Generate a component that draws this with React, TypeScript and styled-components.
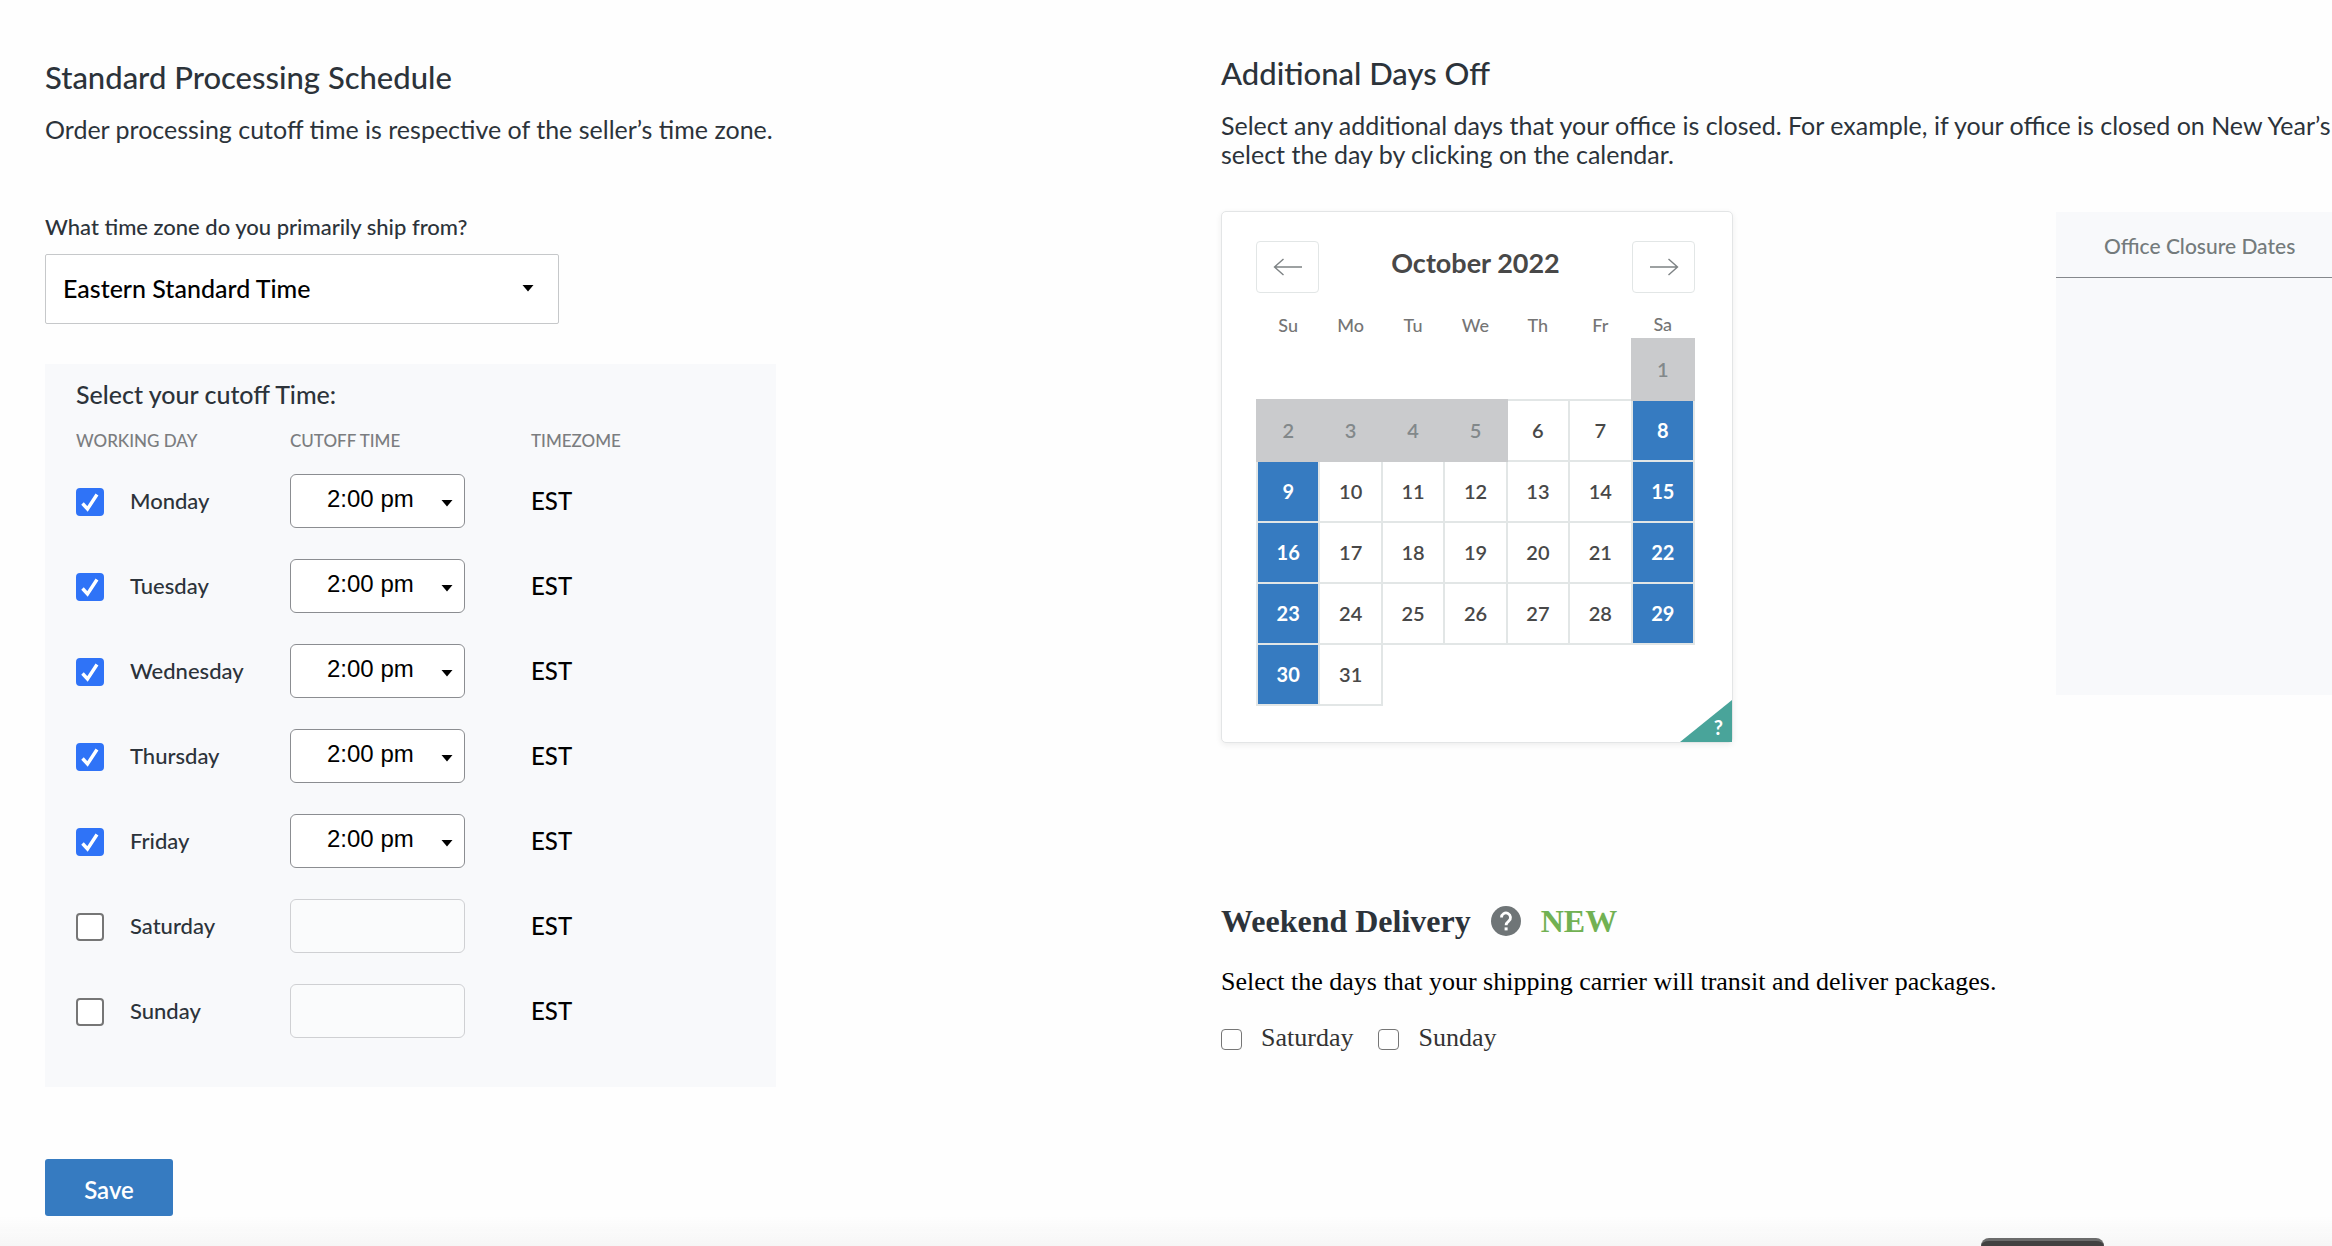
import React, { useState } from "react";
import styled, { createGlobalStyle, css } from "styled-components";

const sans = `Lato, "Open Sans", sans-serif`;
const serif = `"Liberation Serif", serif`;
const ink = "#2c333a";
const panel = "#f8f9fb";
const blue = "#367bc1";
const line = "#e2e6e6";

const Global = createGlobalStyle`
  *, *::before, *::after { box-sizing: border-box; }
  body { margin: 0; background: #fefefe; color: ${ink}; font-family: ${sans}; font-weight: 500; }
  button, select, input { font: inherit; margin: 0; }
  h1, h2, h3, p { margin: 0; font-weight: 500; }
`;

const Page = styled.main`
  display: grid;
  grid-template-columns: minmax(0, 1fr) minmax(0, 1fr);
  column-gap: 65px;
  padding-left: 45px;
  min-height: 100vh;
  overflow: hidden;
`;

const Column = styled.section<{ $top: number }>`
  display: flex;
  flex-direction: column;
  align-items: flex-start;
  padding-top: ${(p) => p.$top}px;
`;

const Heading = styled.h2`
  font-size: 31px;
  line-height: 36px;
`;

const Lead = styled.p`
  margin-top: 20px;
  font-size: 25px;
  line-height: 29px;
  font-weight: 400;
  white-space: nowrap;
`;

const FieldLabel = styled.label`
  margin-top: 70px;
  font-size: 22px;
  line-height: 26px;
`;

const SelectWrap = styled.div`
  position: relative;
  display: inline-block;
`;

const Caret = styled.svg<{ $right: number; $top: number }>`
  position: absolute;
  right: ${(p) => p.$right}px;
  top: ${(p) => p.$top}px;
  width: 12px;
  height: 7px;
  pointer-events: none;
`;

const ZoneSelect = styled.select`
  appearance: none;
  display: block;
  width: 514px;
  height: 70px;
  margin-top: 14px;
  padding: 0 40px 3px 17px;
  border: 1px solid #c6c8ca;
  border-radius: 2px;
  background: #fff;
  color: #000;
  font-size: 25px;
`;

const CutoffPanel = styled.div`
  width: 731px;
  max-width: 100%;
  margin-top: 40px;
  padding: 15px 31px 34px;
  background: ${panel};
`;

const PanelTitle = styled.h3`
  font-size: 25px;
  line-height: 30px;
`;

const CutoffTable = styled.table`
  width: 100%;
  margin-top: 20px;
  border-collapse: collapse;
  table-layout: fixed;
  th, td { padding: 0; text-align: left; }
  th { font-size: 17px; line-height: 24px; height: 29px; font-weight: 500; color: #7b7d80; vertical-align: top; }
  td { height: 85px; vertical-align: middle; font-size: 24px; color: #000; }
`;

const Col = styled.col<{ $w?: number }>`
  ${(p) => p.$w && css`width: ${p.$w}px;`}
`;

const DayLabel = styled.label`
  display: flex;
  align-items: center;
  gap: 26px;
  font-size: 22px;
  color: ${ink};
`;

const Check = styled.input<{ $size: number }>`
  appearance: none;
  flex: none;
  width: ${(p) => p.$size}px;
  height: ${(p) => p.$size}px;
  margin-top: 3px;
  border: ${(p) => (p.$size > 24 ? 2 : 1)}px solid #767676;
  border-radius: 4px;
  background: #fff;
  &:checked {
    border-color: #2f73f7;
    background: #2f73f7 url("data:image/svg+xml,%3Csvg xmlns='http://www.w3.org/2000/svg' viewBox='0 0 24 24'%3E%3Cpath d='M4.5 13.5l5 5.5L19 4.5' fill='none' stroke='white' stroke-width='3.4'/%3E%3C/svg%3E") center / 100% no-repeat;
  }
`;

const TimeSelect = styled.select`
  appearance: none;
  display: block;
  width: 175px;
  height: 54px;
  padding: 0 26px 4px 36px;
  border: 1px solid #8b8d91;
  border-radius: 6px;
  background: #fff;
  color: #000;
  font-family: "Liberation Sans", sans-serif;
  font-size: 24px;
  opacity: 1;
  &:disabled { border-color: #cfd0d3; background: #fafbfc; }
`;

const SaveButton = styled.button`
  width: 128px;
  height: 57px;
  margin-top: 72px;
  padding: 4px 0 0;
  border: 0;
  border-radius: 3px;
  background: ${blue};
  color: #fff;
  font-size: 24px;
  font-weight: 600;
`;

const DaysOffRow = styled.div`
  display: flex;
  align-items: flex-start;
  align-self: stretch;
  gap: 323px;
  margin-top: 42px;
`;

const Calendar = styled.div`
  position: relative;
  flex: none;
  width: 512px;
  padding: 29px 37px 36px 34px;
  border: 1px solid #e3e5e6;
  border-radius: 5px;
  background: #fff;
  box-shadow: 0 2px 6px rgba(0, 0, 0, 0.07);
`;

const CalendarBar = styled.div`
  display: flex;
  align-items: center;
  justify-content: space-between;
`;

const ArrowButton = styled.button`
  display: flex;
  align-items: center;
  justify-content: center;
  width: 63px;
  height: 52px;
  padding: 0;
  border: 1px solid ${line};
  border-radius: 4px;
  background: #fff;
`;

const Month = styled.h3`
  padding-bottom: 10px;
  font-size: 27px;
  font-weight: 700;
  color: #484848;
`;

const DayTable = styled.table`
  width: 439px;
  border-collapse: collapse;
  table-layout: fixed;
  th { height: 46px; padding: 0 0 3px; vertical-align: bottom; font-size: 18px; line-height: 22px; font-weight: 500; color: #757575; }
`;

type Kind = "blank" | "past" | "open" | "off";

const DayCell = styled.td<{ $kind: Kind }>`
  height: 61px;
  padding: 0;
  text-align: center;
  font-size: 20px;
  font-weight: 600;
  color: #484848;
  ${(p) => p.$kind !== "blank" && css`border: 2px solid ${line};`}
  ${(p) => p.$kind === "past" && css`border: 2px double #cacbcd; background: #cacbcd; color: #82888a;`}
  ${(p) => p.$kind === "off" && css`background: ${blue}; color: #fff; font-weight: 700;`}
`;

const DayButton = styled.button`
  width: 100%;
  height: 100%;
  padding: 0 0 2px;
  border: 0;
  background: none;
  color: inherit;
`;

const HelpCorner = styled.button`
  position: absolute;
  right: 0;
  bottom: 0;
  width: 52px;
  height: 42px;
  padding: 12px 9px 0 0;
  border: 0;
  background: #49a49a;
  clip-path: polygon(100% 0, 100% 100%, 0 100%);
  color: #fff;
  font-size: 20px;
  font-weight: 700;
  text-align: right;
`;

const Closures = styled.div`
  flex: 1;
  height: 483px;
  margin-top: 1px;
  background: ${panel};
`;

const ClosuresTitle = styled.h3`
  height: 66px;
  padding: 21px 0 0 48px;
  border-bottom: 1px solid #85888c;
  font-size: 21px;
  line-height: 26px;
  color: #747b7c;
  white-space: nowrap;
`;

const Weekend = styled.div`
  margin-top: 160px;
  font-family: ${serif};
`;

const WeekendTitle = styled.h2`
  display: flex;
  align-items: center;
  gap: 20px;
  font-size: 32px;
  line-height: 36px;
  font-weight: 700;
`;

const IconButton = styled.button`
  display: flex;
  padding: 0;
  border: 0;
  background: none;
`;

const NewTag = styled.span`
  color: #72b153;
`;

const WeekendText = styled.p`
  margin-top: 28px;
  font-size: 26px;
  line-height: 30px;
  font-weight: 400;
  color: #000;
`;

const WeekendChoices = styled.div`
  display: flex;
  gap: 25px;
  margin-top: 26px;
`;

const Choice = styled.label`
  display: flex;
  align-items: center;
  gap: 19px;
  font-size: 26px;
  line-height: 30px;
  font-weight: 400;
  color: #333;
`;

const BottomFade = styled.div`
  position: fixed;
  left: 0;
  right: 0;
  bottom: 0;
  height: 30px;
  background: linear-gradient(rgba(246, 246, 246, 0), #f6f6f6);
  pointer-events: none;
`;

const DockTab = styled.div`
  position: fixed;
  right: 228px;
  bottom: 0;
  width: 123px;
  height: 8px;
  border-top: 3px solid #6b6c6c;
  border-radius: 8px 8px 0 0;
  background: #414141;
`;

const days = ["Monday", "Tuesday", "Wednesday", "Thursday", "Friday", "Saturday", "Sunday"];
const weekdays = ["Su", "Mo", "Tu", "We", "Th", "Fr", "Sa"];

const kindOf = (day: number, col: number): Kind => {
  if (day < 1 || day > 31) return "blank";
  if (day < 6) return "past";
  return col === 0 || col === 6 ? "off" : "open";
};

const Triangle = ({ right, top }: { right: number; top: number }) => (
  <Caret $right={right} $top={top} viewBox="0 0 12 7" aria-hidden="true">
    <path d="M0.500 0h11L6 6.500z" fill="#000" />
  </Caret>
);

const Arrow = ({ flip }: { flip?: boolean }) => (
  <svg width="30" height="18" viewBox="0 0 30 18" fill="none" stroke="#7d8284" strokeWidth="1.4" aria-hidden="true">
    <path d={flip ? "M1 9h27M19.500 1L28.500 9l-9 8" : "M29 9H2M10.500 1L1.500 9l9 8"} />
  </svg>
);

function CutoffRow({ day }: { day: string }) {
  const [on, setOn] = useState(!day.startsWith("S"));
  return (
    <tr>
      <td>
        <DayLabel>
          <Check $size={28} type="checkbox" checked={on} onChange={() => setOn(!on)} />
          {day}
        </DayLabel>
      </td>
      <td>
        <SelectWrap>
          <TimeSelect aria-label={`${day} cutoff time`} disabled={!on}>
            {on && <option>2:00 pm</option>}
          </TimeSelect>
          {on && <Triangle right={12} top={26} />}
        </SelectWrap>
      </td>
      <td>EST</td>
    </tr>
  );
}

export default function App() {
  return (
    <>
      <Global />
      <Page>
        <Column $top={59}>
          <Heading>Standard Processing Schedule</Heading>
          <Lead>Order processing cutoff time is respective of the seller’s time zone.</Lead>
          <FieldLabel htmlFor="zone">What time zone do you primarily ship from?</FieldLabel>
          <SelectWrap>
            <ZoneSelect id="zone">
              <option>Eastern Standard Time</option>
            </ZoneSelect>
            <Triangle right={25} top={45} />
          </SelectWrap>
          <CutoffPanel>
            <PanelTitle>Select your cutoff Time:</PanelTitle>
            <CutoffTable>
              <colgroup>
                <Col $w={214} />
                <Col $w={241} />
                <Col />
              </colgroup>
              <thead>
                <tr>
                  <th>WORKING DAY</th>
                  <th>CUTOFF TIME</th>
                  <th>TIMEZOME</th>
                </tr>
              </thead>
              <tbody>
                {days.map((day) => (
                  <CutoffRow key={day} day={day} />
                ))}
              </tbody>
            </CutoffTable>
          </CutoffPanel>
          <SaveButton type="button">Save</SaveButton>
        </Column>

        <Column $top={55}>
          <Heading>Additional Days Off</Heading>
          <Lead>
            Select any additional days that your office is closed. For example, if your office is closed on New Year’s
            <br />
            select the day by clicking on the calendar.
          </Lead>
          <DaysOffRow>
            <Calendar>
              <CalendarBar>
                <ArrowButton type="button" aria-label="Previous month"><Arrow /></ArrowButton>
                <Month>October 2022</Month>
                <ArrowButton type="button" aria-label="Next month"><Arrow flip /></ArrowButton>
              </CalendarBar>
              <DayTable>
                <thead>
                  <tr>{weekdays.map((d) => <th key={d}>{d}</th>)}</tr>
                </thead>
                <tbody>
                  {[0, 1, 2, 3, 4, 5].map((week) => (
                    <tr key={week}>
                      {weekdays.map((d, col) => {
                        const day = week * 7 + col - 5;
                        const kind = kindOf(day, col);
                        return (
                          <DayCell key={d} $kind={kind}>
                            {kind !== "blank" && (
                              <DayButton type="button" disabled={kind === "past"}>{day}</DayButton>
                            )}
                          </DayCell>
                        );
                      })}
                    </tr>
                  ))}
                </tbody>
              </DayTable>
              <HelpCorner type="button">?</HelpCorner>
            </Calendar>
            <Closures>
              <ClosuresTitle>Office Closure Dates</ClosuresTitle>
            </Closures>
          </DaysOffRow>

          <Weekend>
            <WeekendTitle>
              Weekend Delivery
              <IconButton type="button" aria-label="About weekend delivery">
                <svg width="30" height="30" viewBox="0 0 30 30" aria-hidden="true">
                  <circle cx="15" cy="15" r="15" fill="#6f7577" />
                  <path d="M10.500 11.500a4.500 4.500 0 1 1 7.200 3.600c-1.700 1.300-2.600 2-2.600 4.200" fill="none" stroke="#fff" strokeWidth="2.800" />
                  <rect x="13.600" y="21.400" width="3" height="3" fill="#fff" />
                </svg>
              </IconButton>
              <NewTag>NEW</NewTag>
            </WeekendTitle>
            <WeekendText>Select the days that your shipping carrier will transit and deliver packages.</WeekendText>
            <WeekendChoices>
              <Choice><Check $size={21} type="checkbox" />Saturday</Choice>
              <Choice><Check $size={21} type="checkbox" />Sunday</Choice>
            </WeekendChoices>
          </Weekend>
        </Column>
      </Page>
      <BottomFade />
      <DockTab />
    </>
  );
}
